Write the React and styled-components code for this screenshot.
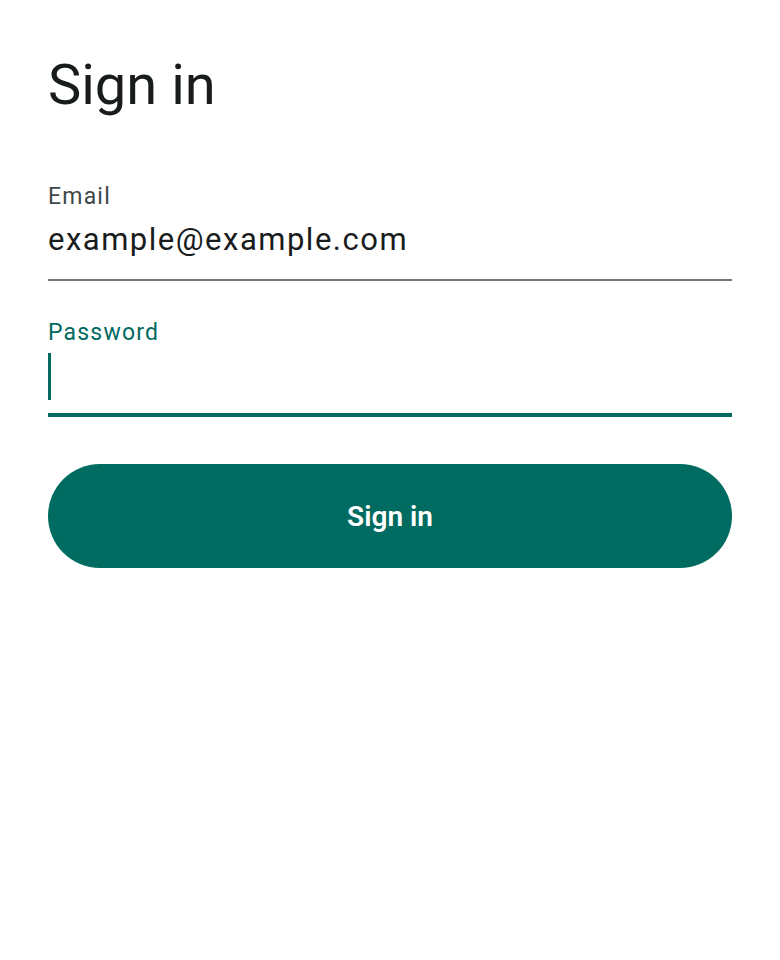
import styled, { createGlobalStyle } from "styled-components";

const GlobalStyle = createGlobalStyle`
  body {
    margin: 0;
    background: #ffffff;
    font-family: Roboto, "Liberation Sans", sans-serif;
  }
`;

const Page = styled.div`
  padding: 53px 48px 48px;
  display: flex;
  flex-direction: column;
`;

const Title = styled.h1`
  margin: 0 0 66px;
  font-size: 56px;
  line-height: 64px;
  font-weight: 400;
  color: #191c1c;
`;

const Form = styled.form`
  display: flex;
  flex-direction: column;
  gap: 38px;
`;

const Field = styled.label`
  position: relative;
  display: flex;
  flex-direction: column;
`;

const Label = styled.span`
  font-size: 23px;
  line-height: 28px;
  letter-spacing: 1.2px;
  color: ${(p) => (p.$focused ? "#006a60" : "#3f4948")};
`;

const Input = styled.input`
  box-sizing: border-box;
  height: 70px;
  padding: 2px 0 15px;
  border: none;
  outline: none;
  background: transparent;
  font-family: inherit;
  font-size: 31px;
  letter-spacing: 1.5px;
  color: #191c1c;
  box-shadow: ${(p) =>
    p.$focused ? "inset 0 -4px 0 #006a60" : "inset 0 -2px 0 #6f7979"};
`;

const Caret = styled.span`
  position: absolute;
  left: 0;
  top: 34px;
  width: 3px;
  height: 47px;
  background: #006a60;
`;

const SubmitButton = styled.button`
  margin-top: 9px;
  height: 104px;
  border: none;
  border-radius: 52px;
  background: #006b60;
  color: #ffffff;
  font-family: inherit;
  font-size: 28px;
  font-weight: 600;
  cursor: pointer;
`;

export default function App() {
  return (
    <Page>
      <GlobalStyle />
      <Title>Sign in</Title>
      <Form onSubmit={(e) => e.preventDefault()}>
        <Field>
          <Label>Email</Label>
          <Input type="email" defaultValue="example@example.com" />
        </Field>
        <Field>
          <Label $focused>Password</Label>
          <Input type="password" $focused />
          <Caret />
        </Field>
        <SubmitButton type="submit">Sign in</SubmitButton>
      </Form>
    </Page>
  );
}
